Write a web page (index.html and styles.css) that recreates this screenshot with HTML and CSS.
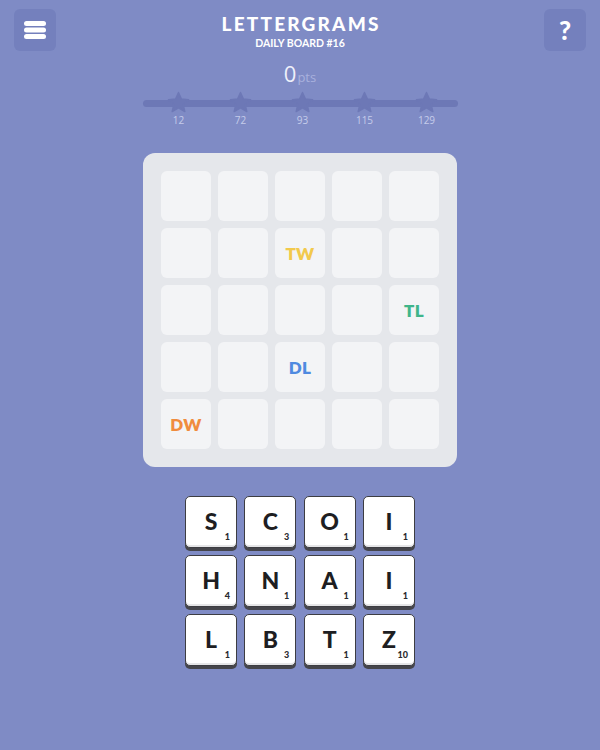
FILE: index.html
```html
<!DOCTYPE html>
<html>
<head>
<meta charset="utf-8">
<link rel="stylesheet" href="styles.css">
</head>
<body>
<div class="app">
  <header class="top">
    <div class="btn" aria-label="menu">
      <svg width="22" height="18" viewBox="0 0 22 18"><rect x="0" y="0" width="22" height="5" rx="2.5" fill="#fff"/><rect x="0" y="6.5" width="22" height="5" rx="2.5" fill="#fff"/><rect x="0" y="13" width="22" height="5" rx="2.5" fill="#fff"/></svg>
    </div>
    <div class="title">
      <div class="name">LETTERGRAMS</div>
      <div class="sub">DAILY BOARD #16</div>
    </div>
    <div class="btn help">?</div>
  </header>

  <div class="score"><span class="num">0</span><span class="pts">pts</span></div>

  <div class="progress">
    <div class="track"></div>
    <div class="marks">
      <div class="mark"><svg class="star" viewBox="0 0 24 24"><path d="M12 1.5l3.1 6.9 7.4.7-5.6 5 1.7 7.4L12 17.6l-6.6 3.9 1.7-7.4-5.6-5 7.4-.7z"/></svg><span>12</span></div>
      <div class="mark"><svg class="star" viewBox="0 0 24 24"><path d="M12 1.5l3.1 6.9 7.4.7-5.6 5 1.7 7.4L12 17.6l-6.6 3.9 1.7-7.4-5.6-5 7.4-.7z"/></svg><span>72</span></div>
      <div class="mark"><svg class="star" viewBox="0 0 24 24"><path d="M12 1.5l3.1 6.9 7.4.7-5.6 5 1.7 7.4L12 17.6l-6.6 3.9 1.7-7.4-5.6-5 7.4-.7z"/></svg><span>93</span></div>
      <div class="mark"><svg class="star" viewBox="0 0 24 24"><path d="M12 1.5l3.1 6.9 7.4.7-5.6 5 1.7 7.4L12 17.6l-6.6 3.9 1.7-7.4-5.6-5 7.4-.7z"/></svg><span>115</span></div>
      <div class="mark"><svg class="star" viewBox="0 0 24 24"><path d="M12 1.5l3.1 6.9 7.4.7-5.6 5 1.7 7.4L12 17.6l-6.6 3.9 1.7-7.4-5.6-5 7.4-.7z"/></svg><span>129</span></div>
    </div>
  </div>

  <div class="board">
    <div class="cell"></div><div class="cell"></div><div class="cell"></div><div class="cell"></div><div class="cell"></div>
    <div class="cell"></div><div class="cell"></div><div class="cell tw">TW</div><div class="cell"></div><div class="cell"></div>
    <div class="cell"></div><div class="cell"></div><div class="cell"></div><div class="cell"></div><div class="cell tl">TL</div>
    <div class="cell"></div><div class="cell"></div><div class="cell dl">DL</div><div class="cell"></div><div class="cell"></div>
    <div class="cell dw">DW</div><div class="cell"></div><div class="cell"></div><div class="cell"></div><div class="cell"></div>
  </div>

  <div class="rack">
    <div class="tile"><span class="l">S</span><span class="v">1</span></div>
    <div class="tile"><span class="l">C</span><span class="v">3</span></div>
    <div class="tile"><span class="l">O</span><span class="v">1</span></div>
    <div class="tile"><span class="l">I</span><span class="v">1</span></div>
    <div class="tile"><span class="l">H</span><span class="v">4</span></div>
    <div class="tile"><span class="l">N</span><span class="v">1</span></div>
    <div class="tile"><span class="l">A</span><span class="v">1</span></div>
    <div class="tile"><span class="l">I</span><span class="v">1</span></div>
    <div class="tile"><span class="l">L</span><span class="v">1</span></div>
    <div class="tile"><span class="l">B</span><span class="v">3</span></div>
    <div class="tile"><span class="l">T</span><span class="v">1</span></div>
    <div class="tile"><span class="l">Z</span><span class="v">10</span></div>
  </div>
</div>
</body>
</html>
```

FILE: styles.css
```css
html, body {
  margin: 0;
  padding: 0;
  background: #7f8bc5;
}
body {
  font-family: "Lato", "Open Sans", sans-serif;
  color: #fff;
}
.app {
  width: 600px;
  height: 750px;
  display: flex;
  flex-direction: column;
  align-items: center;
}
.top {
  width: 100%;
  box-sizing: border-box;
  padding: 9px 14px 0 14px;
  display: flex;
  justify-content: space-between;
  align-items: flex-start;
}
.btn {
  width: 42px;
  height: 42px;
  border-radius: 6px;
  background: #7480bd;
  display: flex;
  align-items: center;
  justify-content: center;
}
.help {
  font-family: "Lato", sans-serif;
  font-weight: 900;
  font-size: 26px;
  color: #fff;
  line-height: 1;
}
.title {
  text-align: center;
  padding-top: 4px;
}
.name {
  font-weight: 900;
  font-size: 19px;
  letter-spacing: 2.2px;
  line-height: 22px;
  margin-right: -2.2px;
}
.sub {
  font-weight: 700;
  font-size: 10.5px;
  line-height: 14px;
  margin-top: 1px;
}
.score {
  margin-top: 9px;
  height: 26px;
  display: flex;
  align-items: baseline;
  font-family: "Open Sans", sans-serif;
}
.num {
  font-size: 22px;
  font-weight: 400;
  color: #eef0fa;
  line-height: 26px;
}
.pts {
  font-size: 13px;
  color: #a9b1dd;
  margin-left: 1px;
}
.progress {
  position: relative;
  width: 315px;
  height: 40px;
  margin-top: 2px;
}
.track {
  position: absolute;
  left: 0;
  right: 0;
  top: 12px;
  height: 7px;
  border-radius: 4px;
  background: #6d78b6;
}
.marks {
  position: absolute;
  left: 0;
  top: 0;
  display: flex;
}
.mark {
  position: absolute;
  top: 0;
  width: 30px;
  margin-left: -15px;
  display: flex;
  flex-direction: column;
  align-items: center;
}
.mark:nth-child(1) { left: 36px; }
.mark:nth-child(2) { left: 98px; }
.mark:nth-child(3) { left: 160px; }
.mark:nth-child(4) { left: 222px; }
.mark:nth-child(5) { left: 284px; }
.star {
  width: 23px;
  height: 23px;
  fill: #6d78b6;
  stroke: #6d78b6;
  stroke-width: 1.5;
  stroke-linejoin: round;
  margin-top: 3px;
}
.mark span {
  font-family: "Open Sans", sans-serif;
  font-size: 10px;
  color: #c5cbea;
  line-height: 12px;
  margin-top: 0px;
}
.board {
  margin-top: 25px;
  width: 314px;
  height: 314px;
  box-sizing: border-box;
  padding: 18px;
  background: #e5e7eb;
  border-radius: 12px;
  display: grid;
  grid-template-columns: repeat(5, 50px);
  grid-template-rows: repeat(5, 50px);
  gap: 7px;
}
.cell {
  background: #f3f4f6;
  border-radius: 6px;
  display: flex;
  align-items: center;
  justify-content: center;
  font-family: "Lato", sans-serif;
  font-weight: 800;
  font-size: 17px;
  letter-spacing: 0.3px;
}
.tw { color: #f2c94c; }
.tl { color: #3fb58a; }
.dl { color: #4f8ae0; }
.dw { color: #f08c3e; }
.rack {
  margin-top: 29px;
  display: grid;
  grid-template-columns: repeat(4, 52px);
  grid-auto-rows: 52px;
  column-gap: 7.3px;
  row-gap: 7px;
}
.tile {
  position: relative;
  box-sizing: border-box;
  background: #fff;
  border: 1.5px solid #3d3d42;
  border-radius: 5px;
  box-shadow: 0 3px 0 #45454b, inset 0 -2px 0 #e6e6e8;
  display: flex;
  align-items: center;
  justify-content: center;
}
.tile .l {
  font-family: "Lato", sans-serif;
  font-weight: 900;
  font-size: 23px;
  color: #1e1e22;
  margin-top: -2px;
}
.tile .v {
  position: absolute;
  right: 6px;
  bottom: 5px;
  font-family: "Lato", sans-serif;
  font-weight: 900;
  font-size: 9px;
  color: #2a2a2e;
}
```
